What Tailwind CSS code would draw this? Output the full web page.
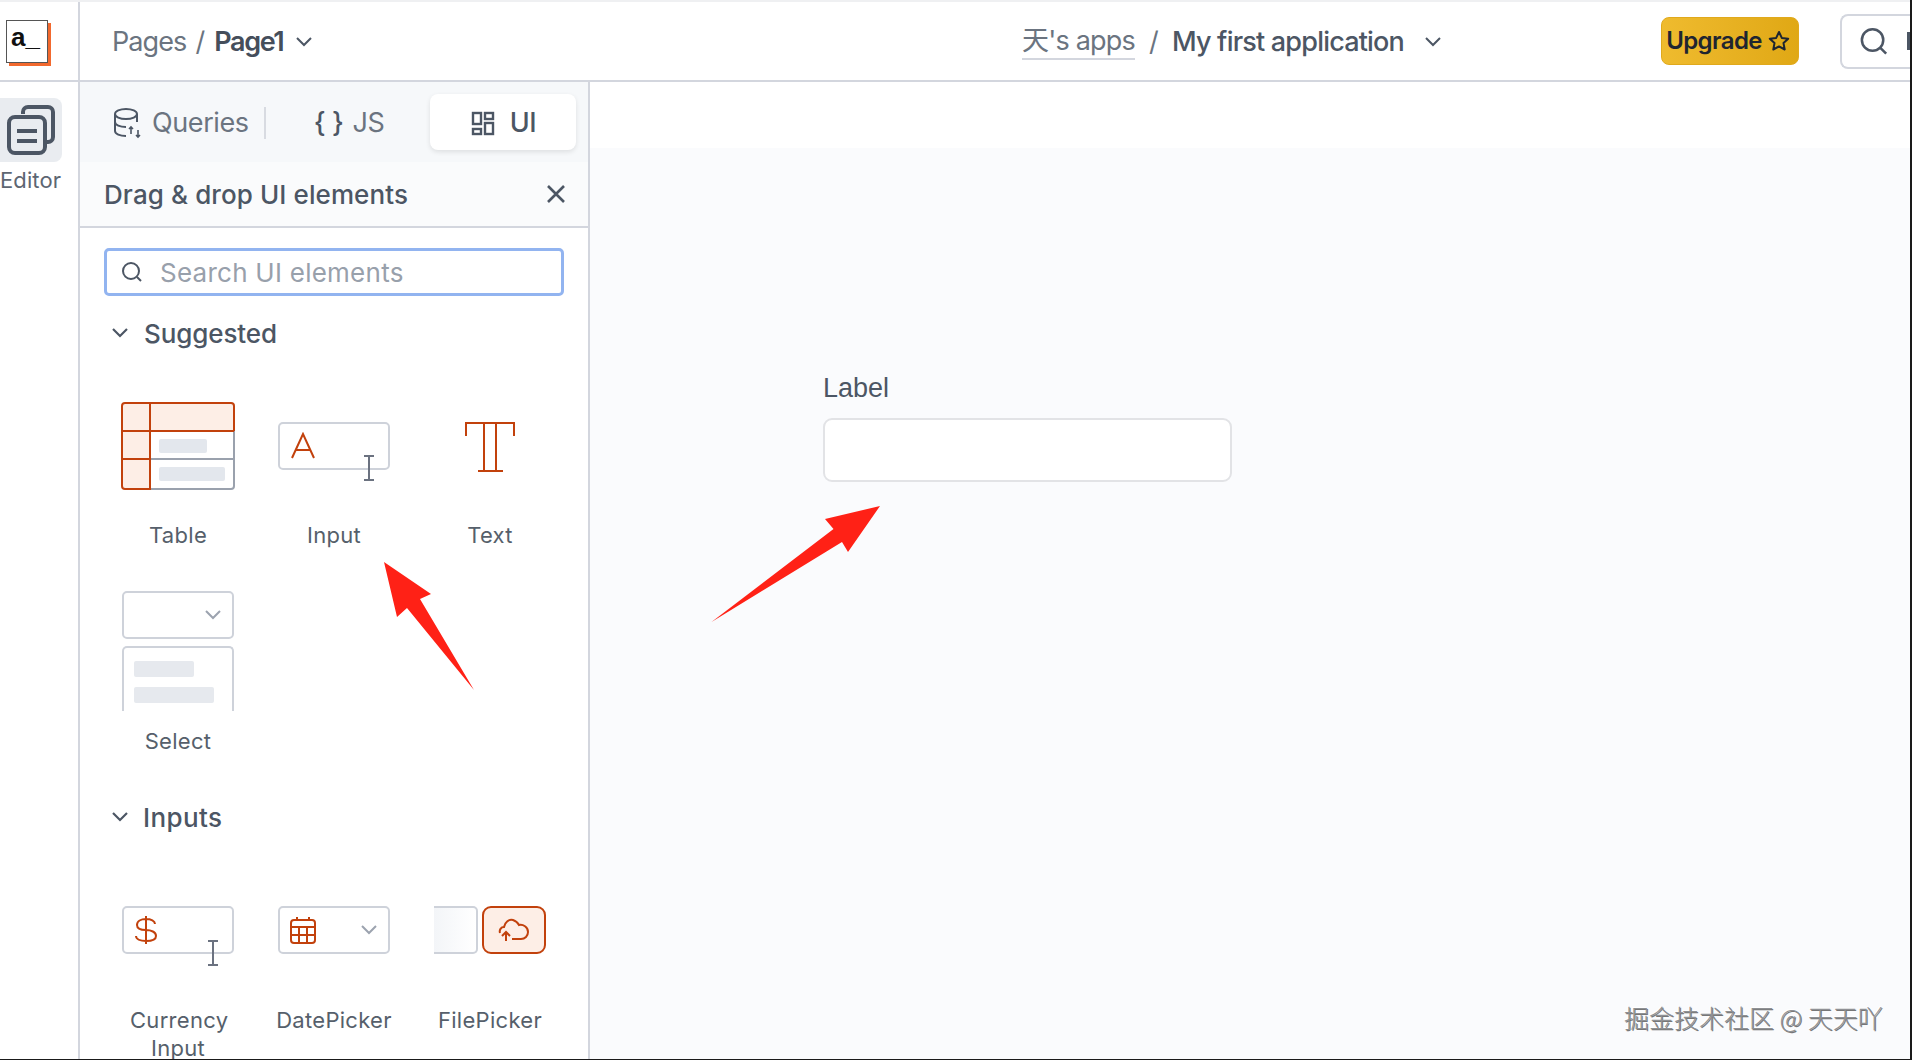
<!DOCTYPE html>
<html lang="en">
<head>
    <meta charset="UTF-8">
    <title>Appsmith Editor</title>
    <script src="https://cdn.jsdelivr.net/npm/@tailwindcss/browser@4"></script>
</head>
<body class="bg-white overflow-hidden">
<div class="relative w-[1912px] h-[1060px] overflow-hidden flex flex-col font-['Inter','Noto_Sans_CJK_SC',sans-serif] text-[#4c5664] border-b border-r-2 border-[#1a1a1a]">
    <div class="h-[2px] bg-[#eff0f2] shrink-0"></div>

    <!-- Top bar -->
    <header class="flex items-center h-[80px] shrink-0 border-b-2 border-[#d3d6de]">
        <div class="w-[80px] h-full shrink-0 border-r-2 border-[#d3d6de] flex items-center pl-[6px]">
            <div class="w-[42px] h-[43px] bg-white border border-[#555] shadow-[3px_3px_0_#f2692e] flex items-start pl-[4px] pt-[1px] font-['Liberation_Sans'] font-bold text-[26px] leading-[30px] text-[#111]">a_</div>
        </div>
        <div class="flex items-center pl-[32px] pt-[2px] w-[942px] shrink-0 text-[27px] tracking-[-0.9px] whitespace-nowrap">
            <span class="text-[#6b7480]">Pages</span>
            <span class="text-[#6b7480] ml-[9px] mr-[10px]">/</span>
            <span class="font-semibold text-[#454e5b] tracking-[-1.4px]">Page1</span>
            <svg class="ml-[12px]" width="18" height="12" viewBox="0 0 18 12" fill="none" stroke="#4c5664" stroke-width="2"><path d="M2 2l7 7 7-7"/></svg>
        </div>
        <div class="flex items-center pt-[2px] shrink-0 text-[27px] tracking-[-0.8px] whitespace-nowrap">
            <span class="text-[#6b7480] border-b-2 border-[#d3d6de] leading-[34px]">天's apps</span>
            <span class="text-[#6b7480] mx-[14px]">/</span>
            <span class="font-medium text-[#4c5664]">My first application</span>
            <svg class="ml-[20px]" width="18" height="12" viewBox="0 0 18 12" fill="none" stroke="#4c5664" stroke-width="2"><path d="M2 2l7 7 7-7"/></svg>
        </div>
        <div class="ml-auto w-[138px] h-[48px] shrink-0 rounded-[8px] bg-linear-to-r from-[#efbb2e] to-[#e0a814] border border-[#e0a91c] flex items-center justify-center gap-[5px] text-[24px] font-semibold text-[#1f2530] tracking-[-0.6px] whitespace-nowrap pr-[3px]">
            Upgrade
            <svg width="24" height="24" viewBox="0 0 24 24" fill="none" stroke="#1f2530" stroke-width="2" stroke-linejoin="round"><path d="M12 3l2.8 5.9 6.4.8-4.7 4.4 1.2 6.4L12 17.4l-5.7 3.1 1.2-6.4-4.7-4.4 6.4-.8z"/></svg>
        </div>
        <div class="ml-[41px] w-[70px] h-[55px] shrink-0 rounded-l-[8px] border-2 border-r-0 border-[#d3d6de] flex items-center pl-[16px]">
            <svg width="32" height="32" viewBox="0 0 32 32" fill="none" stroke="#4c5664" stroke-width="2.6"><circle cx="15" cy="15" r="11"/><path d="M23 23l6 6"/></svg>
            <span class="w-[3px] h-[18px] ml-[18px] bg-[#4c5664]"></span>
        </div>
    </header>

    <div class="flex flex-1 min-h-0">
        <!-- Left rail -->
        <aside class="w-[80px] shrink-0 border-r-2 border-[#d3d6de] pt-[16px]">
            <div class="w-[62px] h-[64px] rounded-r-[8px] bg-[#e9ecf0] flex items-center justify-center">
                <svg width="52" height="52" viewBox="0 0 52 52" fill="none" stroke="#4c5664" stroke-width="4" stroke-linejoin="round">
                    <path d="M18 10v-2a5 5 0 0 1 5-5h20a5 5 0 0 1 5 5v25a5 5 0 0 1-5 5h-3"/>
                    <rect x="4" y="13" width="36" height="36" rx="6"/>
                    <path d="M12 27h20M12 37h20"/>
                </svg>
            </div>
            <div class="text-[22px] leading-[30px] mt-[3px] text-[#5d6672] tracking-[0.1px]">Editor</div>
        </aside>

        <!-- Widgets panel -->
        <section class="w-[510px] shrink-0 border-r-2 border-[#d3d6de] flex flex-col min-h-0">
            <div class="h-[80px] shrink-0 bg-[#f6f8fa] flex items-center pl-[33px] pt-[2px] text-[27px] text-[#6b7480] tracking-[-0.4px] whitespace-nowrap">
                <svg width="32" height="32" viewBox="0 0 32 32" fill="none" stroke="#4c5664" stroke-width="2">
                    <ellipse cx="13" cy="7" rx="11" ry="5"/>
                    <path d="M2 7v17c0 3 5 5 11 5M24 7v8M2 15c0 3 5 5 11 5"/>
                    <path d="M18 27v-7m-2 2l2-2 2 2M25 23v7m-2-2l2 2 2-2" stroke-width="1.6"/>
                </svg>
                <span class="ml-[7px]">Queries</span>
                <span class="w-[2px] h-[32px] bg-[#d8dbe1] ml-[15px]"></span>
                <span class="ml-[48px] text-[#4c5664] font-medium">{ }</span>
                <span class="ml-[9px]">JS</span>
                <div class="ml-[46px] -mt-[2px] w-[146px] h-[56px] rounded-[8px] bg-white shadow-[0_2px_5px_rgba(0,0,0,0.1)] flex items-center justify-center gap-[15px] pt-[2px] text-[#4c5664] font-medium">
                    <svg width="24" height="25" viewBox="0 0 24 25" fill="none" stroke="#4c5664" stroke-width="2.4">
                        <rect x="2" y="2" width="8" height="11"/><rect x="14" y="2" width="8" height="6"/><rect x="2" y="18" width="8" height="5"/><rect x="14" y="12" width="8" height="11"/>
                    </svg>
                    UI
                </div>
            </div>
            <div class="h-[66px] shrink-0 bg-[#fafbfc] border-b-2 border-[#d3d6de] flex items-center justify-between pl-[24px] pr-[22px] text-[26px] font-medium text-[#4c5664] tracking-[0.1px] whitespace-nowrap">
                Drag &amp; drop UI elements
                <svg width="20" height="20" viewBox="0 0 20 20" fill="none" stroke="#4c5664" stroke-width="2.6"><path d="M2 2l16 16M18 2L2 18"/></svg>
            </div>

            <div class="flex-1 min-h-0 overflow-hidden pl-[24px] pr-[24px]">
                <div class="mt-[20px] h-[48px] rounded-[5px] border-[3px] border-[#92b4f0] flex items-center pl-[14px] gap-[17px] text-[26px] text-[#98a0ab] tracking-[0.25px] whitespace-nowrap">
                    <svg width="22" height="22" viewBox="0 0 22 22" fill="none" stroke="#4c5664" stroke-width="2"><circle cx="10" cy="10" r="8"/><path d="M16 16l4 4"/></svg>
                    Search UI elements
                </div>

                <div class="flex items-center h-[40px] mt-[17px] pl-[8px] gap-[16px] text-[26px] font-medium tracking-[-0.1px]">
                    <svg width="16" height="10" viewBox="0 0 16 10" fill="none" stroke="#4c5664" stroke-width="2.2"><path d="M1 1l7 7 7-7"/></svg>
                    Suggested
                </div>

                <div class="grid grid-cols-[156px_156px_156px] -ml-[4px] mt-[32px] text-[22px] text-center text-[#565f6b] leading-[28px] tracking-[0.3px]">
                    <!-- Table -->
                    <div class="h-[206px]">
                        <div class="h-[120px] flex items-center justify-center pt-[2px] pr-[1px]">
                            <svg width="114" height="88" viewBox="0 0 114 88" fill="none">
                                <rect x="1" y="1" width="112" height="86" rx="3" fill="#fff"/>
                                <path d="M2 4a3 3 0 0 1 3-3h106a3 3 0 0 1 3 3v25H30v58H5a3 3 0 0 1-3-3z" fill="#fdeee6"/>
                                <rect x="38" y="37" width="48" height="14" rx="2" fill="#e3e7ed"/>
                                <rect x="38" y="65" width="66" height="14" rx="2" fill="#e3e7ed"/>
                                <path d="M29 29h84v55a3 3 0 0 1-3 3H29zM29 57h84" stroke="#9aa1ad" stroke-width="2"/>
                                <path d="M113 29V4a3 3 0 0 0-3-3H4a3 3 0 0 0-3 3v80a3 3 0 0 0 3 3h25V1M1 29h28M1 57h28M29 29h84" stroke="#c2410c" stroke-width="2"/>
                            </svg>
                        </div>
                        <div class="mt-[16px]">Table</div>
                    </div>
                    <!-- Input -->
                    <div class="h-[206px]">
                        <div class="relative h-[120px] flex items-start justify-center pt-[37px]">
                            <div class="w-[112px] h-[48px] rounded-[5px] border-2 border-[#ced2da] flex items-center pl-[10px]">
                                <svg width="26" height="28" viewBox="0 0 26 28" fill="none" stroke="#c2410c" stroke-width="2"><path d="M2 26L13 2l11 24M6 18h14"/></svg>
                            </div>
                            <svg class="absolute left-[107px] top-[70px]" width="12" height="26" viewBox="0 0 12 26" fill="none" stroke="#6b7280" stroke-width="2"><path d="M1 1h10M1 25h10M6 1v24"/></svg>
                        </div>
                        <div class="mt-[16px]">Input</div>
                    </div>
                    <!-- Text -->
                    <div class="h-[206px]">
                        <div class="h-[120px] flex items-start justify-center pt-[37px] pr-[1px]">
                            <svg width="50" height="50" viewBox="0 0 50 50" fill="none" stroke="#c2410c" stroke-width="2"><path d="M1 14V1h48v13M19 1v48M31 1v48M13 49h25"/></svg>
                        </div>
                        <div class="mt-[16px]">Text</div>
                    </div>
                    <!-- Select -->
                    <div class="h-[206px] col-start-1">
                        <div class="h-[120px] flex flex-col items-center">
                            <div class="w-[112px] h-[48px] rounded-[5px] border-2 border-[#ced2da] flex items-center justify-end pr-[11px]">
                                <svg width="16" height="10" viewBox="0 0 16 10" fill="none" stroke="#9ca3af" stroke-width="2"><path d="M1 1l7 7 7-7"/></svg>
                            </div>
                            <div class="w-[112px] h-[66px] mt-[7px] rounded-t-[5px] border-2 border-b-0 border-[#ced2da] pl-[10px] pt-[13px]">
                                <div class="w-[60px] h-[16px] rounded-[2px] bg-[#e6e9ee]"></div>
                                <div class="w-[80px] h-[16px] rounded-[2px] bg-[#e6e9ee] mt-[10px]"></div>
                            </div>
                        </div>
                        <div class="mt-[16px]">Select</div>
                    </div>
                </div>

                <div class="flex items-center h-[40px] pl-[8px] gap-[15px] text-[26px] font-medium tracking-[0.4px]">
                    <svg width="16" height="10" viewBox="0 0 16 10" fill="none" stroke="#4c5664" stroke-width="2.2"><path d="M1 1l7 7 7-7"/></svg>
                    Inputs
                </div>

                <div class="grid grid-cols-[156px_156px_156px] -ml-[4px] mt-[33px] text-[22px] text-center text-[#565f6b] leading-[28px] tracking-[0.3px]">
                    <!-- Currency Input -->
                    <div>
                        <div class="relative h-[120px] flex items-start justify-center pt-[36px]">
                            <div class="w-[112px] h-[48px] rounded-[5px] border-2 border-[#ced2da] flex items-center pl-[10px]">
                                <svg width="24" height="30" viewBox="0 0 24 30" fill="none" stroke="#c2410c" stroke-width="2"><path d="M21 9c0-3-4-5-9-5S3 6 3 10s4 5 9 5 10 2 10 6-4 5-10 5-10-2-10-5M12 1v28"/></svg>
                            </div>
                            <svg class="absolute left-[107px] top-[70px]" width="12" height="26" viewBox="0 0 12 26" fill="none" stroke="#6b7280" stroke-width="2"><path d="M1 1h10M1 25h10M6 1v24"/></svg>
                        </div>
                        <div class="mt-[16px] px-[30px]">Currency Input</div>
                    </div>
                    <!-- DatePicker -->
                    <div>
                        <div class="h-[120px] flex items-start justify-center pt-[36px]">
                            <div class="w-[112px] h-[48px] rounded-[5px] border-2 border-[#ced2da] flex items-center justify-between pl-[10px] pr-[11px]">
                                <svg width="26" height="28" viewBox="0 0 26 28" fill="none" stroke="#c2410c" stroke-width="2"><rect x="1" y="4" width="24" height="23" rx="3"/><path d="M1 11h24M1 19h24M9 11v16M17 11v16M7 1v4M19 1v4"/></svg>
                                <svg width="16" height="10" viewBox="0 0 16 10" fill="none" stroke="#9ca3af" stroke-width="2"><path d="M1 1l7 7 7-7"/></svg>
                            </div>
                        </div>
                        <div class="mt-[16px]">DatePicker</div>
                    </div>
                    <!-- FilePicker -->
                    <div>
                        <div class="h-[120px] flex items-start justify-center pt-[36px] gap-[4px]">
                            <div class="w-[44px] h-[48px] rounded-r-[5px] border-2 border-l-0 border-[#ced2da] bg-linear-to-r from-[#f3f5f8] to-white"></div>
                            <div class="w-[64px] h-[48px] rounded-[9px] border-2 border-[#c2410c] bg-[#fdeee6] flex items-center justify-center">
                                <svg width="32" height="24" viewBox="0 0 32 24" fill="none" stroke="#c2410c" stroke-width="2"><path d="M2 15c-1-3 1-6 4-6 1-5 5-8 9-7 3 1 5 3 6 5 4-1 9 2 9 7 0 4-3 7-7 7h-9"/><path d="M8 23v-9m-4 4l4-4 4 4"/></svg>
                            </div>
                        </div>
                        <div class="mt-[16px]">FilePicker</div>
                    </div>
                </div>
            </div>
        </section>

        <!-- Canvas -->
        <main class="flex-1 min-w-0 flex flex-col">
            <div class="h-[66px] shrink-0 bg-white"></div>
            <div class="flex-1 bg-[#fafbfd] pl-[233px] pt-[221px]">
                <div class="font-['Liberation_Sans'] text-[27px] leading-[38px] text-[#4c5664]">Label</div>
                <div class="w-[409px] h-[64px] mt-[11px] rounded-[9px] bg-white border-2 border-[#e2e3e6]"></div>
            </div>
        </main>
    </div>

    <!-- Annotation arrows -->
    <svg class="absolute left-0 top-0 pointer-events-none" width="1912" height="1060" fill="#ff2116">
        <polygon points="384,562 431,594 420,599 474,690 407,608 397,617"/>
        <polygon points="880,506 825,519 833.5,529 711.5,622 842,542 848,552"/>
    </svg>

    <!-- Watermark -->
    <div class="absolute left-[1624px] top-[1001px] text-[25px] leading-[32px] font-light text-[#8f9195] whitespace-nowrap font-['Noto_Sans_CJK_SC',sans-serif] [text-shadow:1px_1px_0_#777,-1px_-1px_0_#fff]">掘金技术社区 @ 天天吖</div>
</div>
</body>
</html>
